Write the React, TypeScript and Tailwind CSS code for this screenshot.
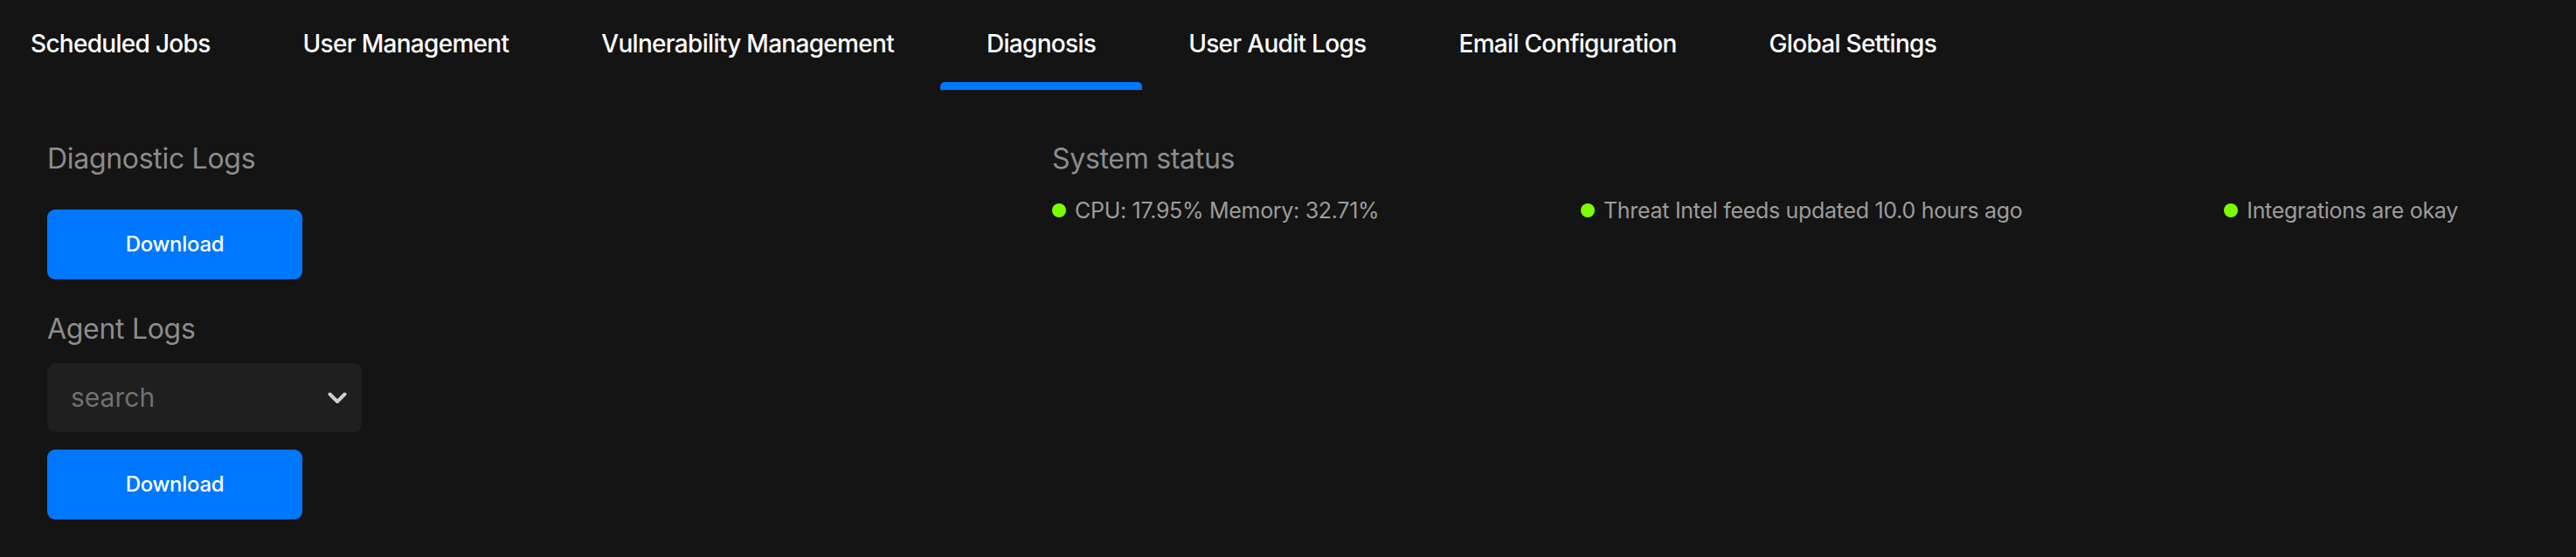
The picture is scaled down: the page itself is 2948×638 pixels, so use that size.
import React from "react";

const tabs = [
  "Scheduled Jobs",
  "User Management",
  "Vulnerability Management",
  "Diagnosis",
  "User Audit Logs",
  "Email Configuration",
  "Global Settings",
];

function StatusItem({ text }: { text: string }) {
  return (
    <div className="flex items-center gap-[10px]">
      <span className="block w-[16px] h-[16px] rounded-full bg-[#7cfc00]" />
      <span className="text-[25px] leading-[30px] text-[#9c9c9c] tracking-[-0.3px]">{text}</span>
    </div>
  );
}

export default function App() {
  return (
    <div
      className="min-h-screen w-full bg-[#141414]"
      style={{ fontFamily: "Inter, 'Noto Sans', sans-serif" }}
    >
      <div className="flex -ml-[18px]">
        {tabs.map((t) => {
          const active = t === "Diagnosis";
          return (
            <div key={t} className="flex flex-col px-[53px] relative">
              <div className="h-[94px] flex items-center pt-[6px] text-[28px] font-medium text-white whitespace-nowrap tracking-[-0.7px]">
                {t}
              </div>
              <div className="h-[9px]" />
              {active && (
                <div className="absolute left-0 right-0 bottom-0 h-[9px] rounded-t-[5px] bg-[#0077ff]" />
              )}
            </div>
          );
        })}
      </div>

      <div className="flex pl-[54px] pt-[58px]">
        <div className="w-[1150px] flex flex-col">
          <div className="text-[32px] leading-[42px] text-[#8c8c8c] tracking-[-0.3px]">Diagnostic Logs</div>
          <button className="mt-[37px] w-[292px] h-[80px] rounded-[9px] bg-[#0077ff] text-white text-[24px] font-medium tracking-[-0.3px]">
            Download
          </button>
          <div className="mt-[36px] text-[32px] leading-[42px] text-[#8c8c8c] tracking-[-0.3px]">Agent Logs</div>
          <div className="mt-[18px] w-[360px] h-[79px] rounded-[9px] bg-[#1f1f1f] flex items-center justify-between pl-[27px] pr-[17px]">
            <span className="text-[30px] text-[#707070]">search</span>
            <svg width="22" height="14" viewBox="0 0 22 14" fill="none">
              <path d="M2.5 2.5 L11 11 L19.5 2.5" stroke="#cfcfcf" strokeWidth="4" strokeLinecap="round" strokeLinejoin="round" />
            </svg>
          </div>
          <button className="mt-[20px] w-[292px] h-[80px] rounded-[9px] bg-[#0077ff] text-white text-[24px] font-medium tracking-[-0.3px]">
            Download
          </button>
        </div>
        <div className="flex flex-col w-[1609px]">
          <div className="text-[32px] leading-[42px] text-[#8c8c8c] tracking-[-0.3px]">System status</div>
          <div className="mt-[23px] flex justify-between">
            <StatusItem text="CPU: 17.95% Memory: 32.71%" />
            <StatusItem text="Threat Intel feeds updated 10.0 hours ago" />
            <StatusItem text="Integrations are okay" />
          </div>
        </div>
      </div>
    </div>
  );
}
